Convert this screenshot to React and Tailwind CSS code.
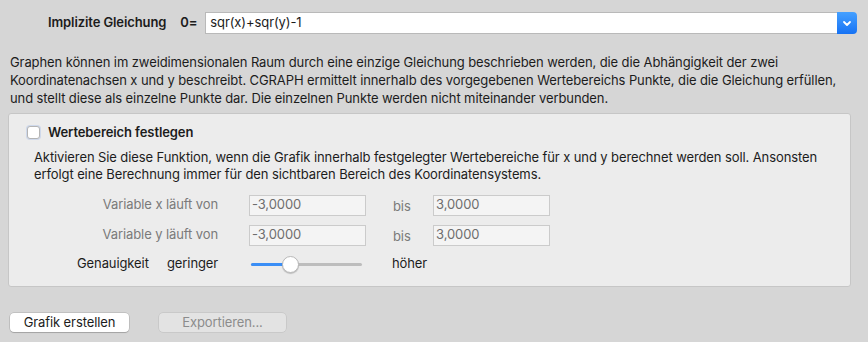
import React from 'react';

const font = { fontFamily: 'Inter, "Liberation Sans", Arial, sans-serif' };

function ComboBox({ value }) {
  return (
    <div className="flex h-[22px] flex-1 items-stretch">
      <div className="flex flex-1 items-center border-y border-l border-[#b9b9b9] bg-white pl-[4px] text-[13px] text-[#1c1c1c]">
        {value}
      </div>
      <div className="flex w-[20px] items-center justify-center rounded-r-[4px] bg-gradient-to-b from-[#45a0ff] to-[#1672f4]">
        <svg width="10" height="7" viewBox="0 0 10 7" fill="none">
          <path d="M2 2 L5 5 L8 2" stroke="white" strokeWidth="1.8" strokeLinecap="round" strokeLinejoin="round" />
        </svg>
      </div>
    </div>
  );
}

function NumField({ value }) {
  return (
    <div className="flex h-[21px] w-[117px] items-center border border-[#cbcbcb] bg-[#f4f4f4] pl-[2px] text-[13px] text-[#6e6e6e]">
      {value}
    </div>
  );
}

function RangeRow({ label, from, to }) {
  return (
    <div className="flex h-[21px] items-center">
      <div className="w-[209px] text-right text-[13px] text-[#7a7a7a]">{label}</div>
      <div className="ml-[31px]">
        <NumField value={from} />
      </div>
      <div className="ml-[27px] w-[40px] pt-[3px] text-[13px] text-[#7a7a7a]">bis</div>
      <NumField value={to} />
    </div>
  );
}

export default function App() {
  return (
    <div className="flex h-[342px] w-[868px] flex-col bg-[#d6d6d6] tracking-[-0.1px] text-[#1c1c1c]" style={font}>
      <div className="mt-[12px] flex items-center pl-[48px] pr-[11px]">
        <span className="text-[13px] font-semibold">Implizite Gleichung</span>
        <span className="ml-[14px] w-[25px] text-[13px] font-semibold">0=</span>
        <ComboBox value="sqr(x)+sqr(y)-1" />
      </div>

      <p className="mt-[19px] px-[10px] text-[13px] leading-[18px]">
        Graphen können im zweidimensionalen Raum durch eine einzige Gleichung beschrieben werden, die die Abhängigkeit der zwei
        <br />
        Koordinatenachsen x und y beschreibt. CGRAPH ermittelt innerhalb des vorgegebenen Wertebereichs Punkte, die die Gleichung erfüllen,
        <br />
        und stellt diese als einzelne Punkte dar. Die einzelnen Punkte werden nicht miteinander verbunden.
      </p>

      <div className="ml-[8px] mr-[17px] mt-[6px] h-[174px] rounded-[3px] border border-[#c6c6c6] bg-[#ececec]">
        <div className="ml-[18px] mt-[9px] flex items-center gap-[8px]">
          <div className="h-[13px] w-[13px] rounded-[3px] border border-[#b4b4b4] bg-white shadow-[0_0_0_1px_rgba(120,160,230,0.25)]" />
          <span className="text-[13px] font-semibold">Wertebereich festlegen</span>
        </div>
        <p className="ml-[25px] mt-[6px] text-[13px] leading-[17px]">
          Aktivieren Sie diese Funktion, wenn die Grafik innerhalb festgelegter Wertebereiche für x und y berechnet werden soll. Ansonsten
          <br />
          erfolgt eine Berechnung immer für den sichtbaren Bereich des Koordinatensystems.
        </p>
        <div className="mt-[12px] flex flex-col gap-[9px]">
          <RangeRow label="Variable x läuft von" from="-3,0000" to="3,0000" />
          <RangeRow label="Variable y läuft von" from="-3,0000" to="3,0000" />
        </div>
        <div className="mt-[8px] flex h-[20px] items-center text-[13px]">
          <span className="ml-[68px] w-[90px]">Genauigkeit</span>
          <span className="w-[84px]">geringer</span>
          <div className="relative h-[20px] w-[111px]">
            <div className="absolute left-0 right-0 top-[9px] h-[3px] rounded-full bg-[#bdbdbd]" />
            <div className="absolute left-0 top-[9px] h-[3px] w-[38px] rounded-full bg-[#3a8ef6]" />
            <div className="absolute left-[31px] top-[2px] h-[17px] w-[17px] rounded-full border border-[#b9b9b9] bg-white shadow-[0_1px_1px_rgba(0,0,0,0.2)]" />
          </div>
          <span className="ml-[30px]">höher</span>
        </div>
      </div>

      <div className="ml-[10px] mt-[26px] flex gap-[30px]">
        <div className="flex h-[19px] w-[119px] items-center justify-center rounded-[4px] bg-white text-[13px] shadow-[0_0_0_0.5px_rgba(0,0,0,0.2),0_1px_1px_rgba(0,0,0,0.15)]">
          Grafik erstellen
        </div>
        <div className="flex h-[19px] w-[127px] items-center justify-center rounded-[4px] bg-[#e3e3e3] text-[13px] text-[#8c8c8c] shadow-[0_0_0_0.5px_rgba(0,0,0,0.12)]">
          Exportieren...
        </div>
      </div>
    </div>
  );
}
